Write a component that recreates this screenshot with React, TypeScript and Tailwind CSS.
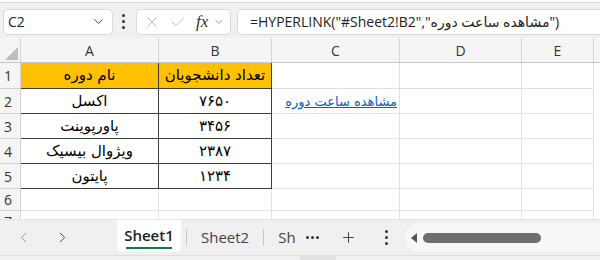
import React from 'react';
import { ChevronDown, ChevronLeft, ChevronRight, X, Check, Plus } from 'lucide-react';

const COLS = [
  { key: 'A', w: 138 },
  { key: 'B', w: 113 },
  { key: 'C', w: 128 },
  { key: 'D', w: 122 },
  { key: 'E', w: 72 },
];

const ROWS: { n: number; h: number; a?: string; b?: string }[] = [
  { n: 1, h: 26, a: 'نام دوره', b: 'تعداد دانشجویان' },
  { n: 2, h: 25, a: 'اکسل', b: '۷۶۵۰' },
  { n: 3, h: 25, a: 'پاورپوینت', b: '۳۴۵۶' },
  { n: 4, h: 25, a: 'ویژوال بیسیک', b: '۲۳۸۷' },
  { n: 5, h: 25, a: 'پایتون', b: '۱۲۳۴' },
  { n: 6, h: 22 },
  { n: 7, h: 22 },
];

const uiFont = "font-['Open_Sans','DejaVu_Sans',sans-serif]";
const cellFont = "font-['DejaVu_Sans','Noto_Sans',sans-serif]";

function VDots({ className = '' }: { className?: string }) {
  return (
    <div className={`flex flex-col items-center gap-[3px] ${className}`}>
      <span className="w-[3px] h-[3px] rounded-full bg-[#333]" />
      <span className="w-[3px] h-[3px] rounded-full bg-[#333]" />
      <span className="w-[3px] h-[3px] rounded-full bg-[#333]" />
    </div>
  );
}

function FormulaBar() {
  return (
    <div className="h-[35px] bg-[#f0f0f0] flex items-center pt-[2px]">
      <div className="ml-[3px] w-[110px] h-[26px] bg-white border border-[#dadada] rounded-[5px] flex items-center pl-[4px] pr-[6px]">
        <span className={`${uiFont} text-[14px] text-[#222] flex-1`}>C2</span>
        <ChevronDown size={15} strokeWidth={1.6} className="text-[#444]" />
      </div>
      <VDots className="ml-[9px] mr-[11px]" />
      <div className="w-[95px] h-[26px] bg-white border border-[#dadada] rounded-[5px] flex items-center pl-[6px]">
        <X size={18} strokeWidth={1.2} className="text-[#b5b5b5]" />
        <Check size={18} strokeWidth={1.2} className="text-[#b5b5b5] ml-[8px]" />
        <span className="ml-[9px] font-['Liberation_Serif',serif] italic text-[17px] text-[#333] leading-none">
          fx
        </span>
        <ChevronDown size={12} strokeWidth={1.4} className="text-[#666] ml-[5px]" />
      </div>
      <div className="ml-[6px] flex-1 h-[26px] bg-white border border-[#dadada] border-r-0 rounded-l-[5px] flex items-center pl-[12px]">
        <span className={`${uiFont} text-[14px] text-[#222] whitespace-nowrap`}>
          =HYPERLINK("#Sheet2!B2","مشاهده ساعت دوره")
        </span>
      </div>
    </div>
  );
}

function Grid() {
  return (
    <div className="h-[181px] overflow-hidden bg-white">
      {/* column headers */}
      <div className="flex h-[25px] bg-[#f5f5f5] border-b border-[#c8c8c8]">
        <div className="w-[21px] border-r border-[#d4d4d4] flex items-end justify-end p-[2px]">
          <div className="w-0 h-0 border-l-[13px] border-l-transparent border-b-[13px] border-b-[#bdbdbd]" />
        </div>
        {COLS.map(c => (
          <div
            key={c.key}
            style={{ width: c.w }}
            className={`shrink-0 border-r border-[#d4d4d4] flex items-center justify-center ${uiFont} text-[14px] text-[#333]`}
          >
            {c.key}
          </div>
        ))}
      </div>
      {ROWS.map(r => (
        <div key={r.n} className="flex" style={{ height: r.h }}>
          <div className={`w-[21px] shrink-0 bg-[#f5f5f5] border-r border-b border-[#d4d4d4] flex items-center pl-[4px] ${uiFont} text-[14px] text-[#333]`}>
            {r.n}
          </div>
          {COLS.map((c, i) => {
            const inTable = r.n <= 5 && i < 2;
            const header = r.n === 1 && inTable;
            const text = i === 0 ? r.a : i === 1 ? r.b : undefined;
            return (
              <div
                key={c.key}
                style={{ width: c.w }}
                className={`shrink-0 flex items-center ${
                  inTable
                    ? `border-r border-b border-[#3c3c3c] justify-center ${i === 0 ? '' : ''}`
                    : 'border-r border-b border-[#e1e1e1]'
                } ${header ? 'bg-[#ffc000]' : ''} ${r.n === 1 && i === 0 ? 'border-l-0' : ''}`}
              >
                {text && (
                  <span dir="rtl" className={`${cellFont} text-[15px] text-black`}>
                    {text}
                  </span>
                )}
                {r.n === 2 && c.key === 'C' && (
                  <span
                    dir="rtl"
                    className={`${cellFont} text-[13px] text-[#0563c1] underline ml-auto pr-[2px] pt-[2px]`}
                  >
                    مشاهده ساعت دوره
                  </span>
                )}
              </div>
            );
          })}
        </div>
      ))}
    </div>
  );
}

function TabBar() {
  return (
    <div className="h-[36px] bg-[#f0f0f0] border-t border-[#e3e3e3] flex items-stretch">
      <div className="w-[117px] flex items-center pl-[15px] gap-[22px]">
        <ChevronLeft size={17} strokeWidth={1.4} className="text-[#9a9a9a]" />
        <ChevronRight size={17} strokeWidth={1.4} className="text-[#444]" />
      </div>
      <div className="w-[64px] bg-white rounded-b-[5px] flex flex-col items-center justify-center pt-[2px] mb-[3px]">
        <span className={`${uiFont} text-[15px] font-semibold text-[#222] leading-[20px]`}>Sheet1</span>
        <span className="w-[46px] h-[2px] bg-[#107c41] mt-[2px]" />
      </div>
      <div className="flex items-center">
        <span className="w-px h-[17px] bg-[#c8c8c8] ml-[5px]" />
        <span className={`${uiFont} text-[15px] text-[#444] ml-[14px] mr-[14px]`}>Sheet2</span>
        <span className="w-px h-[17px] bg-[#c8c8c8]" />
        <span className={`${uiFont} text-[15px] text-[#444] ml-[14px]`}>Sh</span>
        <div className="ml-[10px] flex gap-[2px]">
          <span className="w-[3px] h-[3px] rounded-full bg-[#333]" />
          <span className="w-[3px] h-[3px] rounded-full bg-[#333]" />
          <span className="w-[3px] h-[3px] rounded-full bg-[#333]" />
        </div>
        <Plus size={17} strokeWidth={1.3} className="text-[#333] ml-[21px]" />
        <VDots className="ml-[28px]" />
      </div>
      <div className="ml-[17px] flex-1 my-[3px] bg-[#f7f7f7] rounded-l-full flex items-center pl-[6px]">
        <div className="w-0 h-0 border-y-[5px] border-y-transparent border-r-[6px] border-r-[#555]" />
        <div className="ml-[6px] w-[118px] h-[10px] rounded-full bg-[#6e6e6e]" />
      </div>
    </div>
  );
}

export default function App() {
  return (
    <div className="w-[600px] h-[260px] overflow-hidden bg-[#f0f0f0]">
      <div className="h-[3px] bg-[#fbfbfb] border-b border-[#d8d8d8]" />
      <FormulaBar />
      <Grid />
      <TabBar />
      <div className="h-[5px] bg-[#f0f0f0] border-t border-[#dedede] flex">
        <div className="ml-[300px] w-[36px] bg-[#e2e2e2]" />
      </div>
    </div>
  );
}
